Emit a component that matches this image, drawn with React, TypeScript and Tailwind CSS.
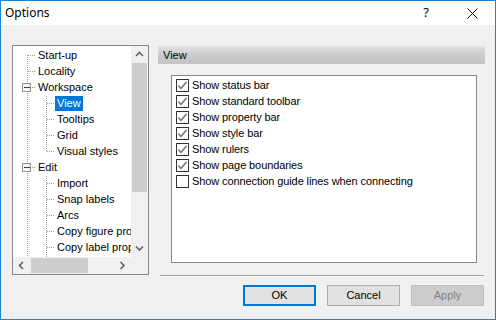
import React from "react";

const treeItems: { label: string; level: 1 | 2; selected?: boolean }[] = [
  { label: "Start-up", level: 1 },
  { label: "Locality", level: 1 },
  { label: "Workspace", level: 1 },
  { label: "View", level: 2, selected: true },
  { label: "Tooltips", level: 2 },
  { label: "Grid", level: 2 },
  { label: "Visual styles", level: 2 },
  { label: "Edit", level: 1 },
  { label: "Import", level: 2 },
  { label: "Snap labels", level: 2 },
  { label: "Arcs", level: 2 },
  { label: "Copy figure properties", level: 2 },
  { label: "Copy label properties", level: 2 },
];

const checks: { label: string; on: boolean }[] = [
  { label: "Show status bar", on: true },
  { label: "Show standard toolbar", on: true },
  { label: "Show property bar", on: true },
  { label: "Show style bar", on: true },
  { label: "Show rulers", on: true },
  { label: "Show page boundaries", on: true },
  { label: "Show connection guide lines when connecting", on: false },
];

const FONT = { fontFamily: '"Liberation Sans", Arial, sans-serif' };

function TreeLines() {
  const c = (i: number) => 9 + 16 * i + 0.5;
  const dot = "#a0a0a0";
  const h = (i: number, x1: number, x2: number) => (
    <line key={"h" + i + x1} x1={x1} x2={x2} y1={c(i)} y2={c(i)} stroke={dot} strokeDasharray="1 1" />
  );
  const box = (i: number) => (
    <g key={"b" + i}>
      <rect x={9.5} y={c(i) - 4.5} width={8} height={8} fill="#fafafa" stroke="#919191" />
      <line x1={11} x2={17} y1={c(i) - 0.5} y2={c(i) - 0.5} stroke="#23418f" />
    </g>
  );
  return (
    <svg className="absolute left-0 top-0" width={118} height={211} shapeRendering="crispEdges">
      <line x1={14.5} x2={14.5} y1={9} y2={211} stroke={dot} strokeDasharray="1 1" />
      <line x1={33.5} x2={33.5} y1={c(3) - 8} y2={c(6)} stroke={dot} strokeDasharray="1 1" />
      <line x1={33.5} x2={33.5} y1={c(8) - 8} y2={211} stroke={dot} strokeDasharray="1 1" />
      {h(0, 15, 23)}
      {h(1, 15, 23)}
      {h(2, 19, 23)}
      {h(7, 19, 23)}
      {[3, 4, 5, 6, 8, 9, 10, 11, 12].map((i) => h(i, 34, 42))}
      {box(2)}
      {box(7)}
    </svg>
  );
}

function Chevron({ dir }: { dir: "up" | "down" | "left" | "right" }) {
  const paths: Record<string, string> = {
    up: "M1 5 L4.5 1.5 L8 5",
    down: "M1 1.5 L4.5 5 L8 1.5",
    left: "M5 1 L1.5 4.5 L5 8",
    right: "M1.5 1 L5 4.5 L1.5 8",
  };
  const vert = dir === "up" || dir === "down";
  return (
    <svg width={vert ? 9 : 7} height={vert ? 7 : 9}>
      <path d={paths[dir]} fill="none" stroke="#606060" strokeWidth={1.6} />
    </svg>
  );
}

function TreePanel() {
  return (
    <div className="w-[137px] h-[230px] border border-[#828790] bg-white flex flex-col shrink-0">
      <div className="flex h-[211px]">
        <div className="relative w-[118px] h-[211px] overflow-hidden pt-[1px]">
          <TreeLines />
          {treeItems.map((t) => (
            <div
              key={t.label}
              className={"relative h-[16px] flex items-center whitespace-nowrap " + (t.level === 1 ? "pl-[23px]" : "pl-[42px]")}
            >
              <span
                className={
                  "px-[2px] h-[15px] leading-[15px] text-[11px] " +
                  (t.selected ? "bg-[#0078d7] text-white" : "text-black")
                }
              >
                {t.label}
              </span>
            </div>
          ))}
        </div>
        <div className="w-[17px] bg-[#f0f0f0] flex flex-col">
          <div className="h-[17px] flex items-center justify-center">
            <Chevron dir="up" />
          </div>
          <div className="h-[129px] mx-[1px] bg-[#cdcdcd]" />
          <div className="flex-1" />
          <div className="h-[17px] flex items-center justify-center">
            <Chevron dir="down" />
          </div>
        </div>
      </div>
      <div className="flex h-[17px]">
        <div className="w-[118px] bg-[#f0f0f0] flex items-center">
          <div className="w-[17px] h-[17px] flex items-center justify-center">
            <Chevron dir="left" />
          </div>
          <div className="w-[57px] h-[15px] ml-[1px] bg-[#cdcdcd]" />
          <div className="flex-1" />
          <div className="w-[17px] h-[17px] flex items-center justify-center">
            <Chevron dir="right" />
          </div>
        </div>
        <div className="w-[17px] bg-[#f0f0f0]" />
      </div>
    </div>
  );
}

function CheckBox({ on }: { on: boolean }) {
  return (
    <div className="w-[13px] h-[13px] border border-[#333333] bg-white flex items-center justify-center shrink-0">
      {on && (
        <svg width={11} height={11}>
          <path d="M1.5 5.5 L4 8.5 L9.5 2" fill="none" stroke="#6a6a6a" strokeWidth={1.4} />
        </svg>
      )}
    </div>
  );
}

export default function App() {
  return (
    <div className="w-[496px] h-[320px] border border-[#1883d7] flex flex-col bg-[#f0f0f0] overflow-hidden" style={FONT}>
      <div className="h-[24px] bg-white flex items-center shrink-0">
        <div className="pl-[4px] text-[12px] text-black flex-1" style={{ fontFamily: '"Noto Sans", "Open Sans", sans-serif' }}>
          Options
        </div>
        <div className="w-[46px] h-[24px] flex items-center justify-center text-[13px] text-black" style={{ fontFamily: '"Noto Sans", sans-serif' }}>
          ?
        </div>
        <div className="w-[46px] h-[24px] flex items-center justify-center">
          <svg width={11} height={11}>
            <path d="M0.5 0.5 L10.5 10.5 M10.5 0.5 L0.5 10.5" stroke="#111" strokeWidth={1} />
          </svg>
        </div>
      </div>
      <div className="flex-1 flex pl-[11px] pt-[20px]">
        <TreePanel />
        <div className="ml-[9px] mt-[1px] w-[327px] flex flex-col">
          <div className="h-[18px] bg-linear-to-b from-[#e2e2e2] via-[#cbcbcb] to-[#c3c3c3] flex items-center pl-[5px] text-[11px] text-black">
            View
          </div>
          <div className="mt-[11px] ml-[13px] mr-[8px] h-[188px] border border-[#828790] bg-white pt-[1px] pl-[4px]">
            {checks.map((c) => (
              <div key={c.label} className="h-[16px] flex items-center gap-[3px] text-[11px] text-black whitespace-nowrap tracking-[-0.1px]">
                <CheckBox on={c.on} />
                <span>{c.label}</span>
              </div>
            ))}
          </div>
          <div className="mt-[12px] ml-[2px] mr-[1px] h-[2px] border-t border-[#a0a0a0] border-b border-b-white" />
          <div className="mt-[8px] mr-[1px] flex justify-end gap-[11px]">
            <div className="w-[73px] h-[21px] border-2 border-[#0078d7] bg-[#e1e1e1] flex items-center justify-center text-[11px] text-black">
              OK
            </div>
            <div className="w-[73px] h-[21px] border border-[#adadad] bg-[#e1e1e1] flex items-center justify-center text-[11px] text-black">
              Cancel
            </div>
            <div className="w-[73px] h-[21px] border border-[#bfbfbf] bg-[#cccccc] flex items-center justify-center text-[11px] text-[#838383]">
              Apply
            </div>
          </div>
        </div>
      </div>
    </div>
  );
}
